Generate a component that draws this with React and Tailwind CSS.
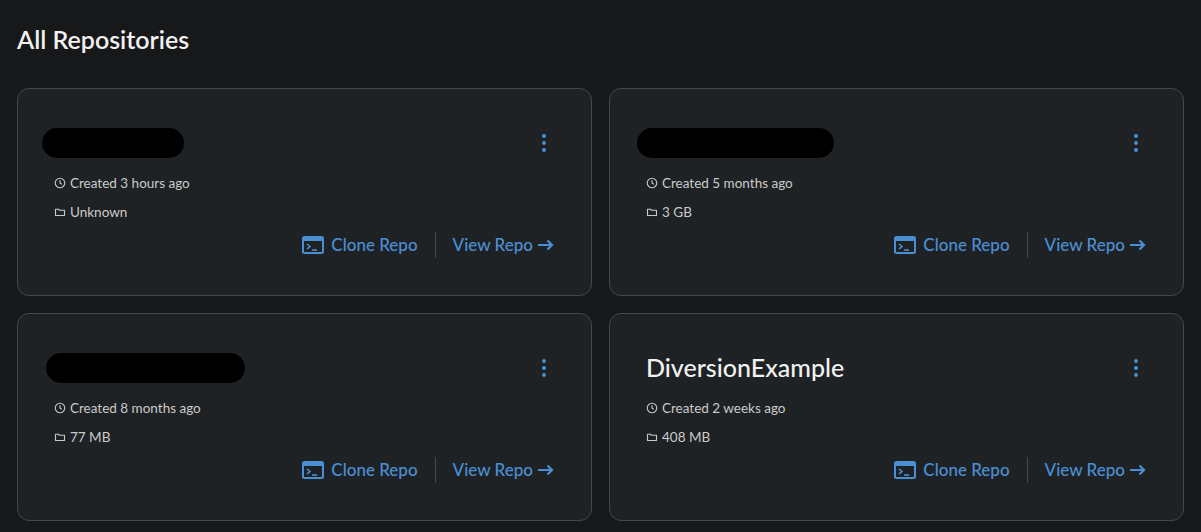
import React from "react";

const Clock = () => (
  <svg width="12" height="12" viewBox="0 0 24 24" fill="none" stroke="currentColor" strokeWidth="2.2" strokeLinecap="round"><circle cx="12" cy="12" r="9.5"/><path d="M12 7v5l3 2"/></svg>
);
const Folder = () => (
  <svg width="12" height="12" viewBox="0 0 24 24" fill="none" stroke="currentColor" strokeWidth="2.2" strokeLinejoin="round"><path d="M3 6.5h6l2 2h10V19H3z"/></svg>
);
const Term = () => (
  <svg width="22" height="20" viewBox="0 0 22 20"><rect x="1" y="2" width="20" height="16" rx="1.5" fill="none" stroke="#4a8fd4" strokeWidth="2"/><rect x="1" y="2" width="20" height="4" fill="#4a8fd4"/><path d="M5 9l3 2.5L5 14" fill="none" stroke="#4a8fd4" strokeWidth="1.6"/><path d="M10 15h5" stroke="#4a8fd4" strokeWidth="1.6"/></svg>
);
const Arrow = () => (
  <svg width="16" height="12" viewBox="0 0 16 12" fill="none" stroke="#4a8fd4" strokeWidth="2.2"><path d="M0 6h14M9.5 1.5L14 6l-4.5 4.5"/></svg>
);

function Card({ name, redact, created, size }) {
  return (
    <div className="h-[208px] rounded-xl border border-[#45484b] bg-[#1f2224] pl-[36px] pr-[37px] pt-[38px]">
      <div className="flex h-[32px] items-center justify-between">
        {name ? (
          <div className="text-[25px] font-medium text-[#f1f1f1]">{name}</div>
        ) : (
          <div className="h-[30px] rounded-full bg-black" style={{ width: redact.w, marginLeft: redact.ml }} />
        )}
        <div className="mr-[8px] flex flex-col gap-[3px]">
          {[0, 1, 2].map((i) => <span key={i} className="h-[4px] w-[4px] rounded-full bg-[#4a8fd4]" />)}
        </div>
      </div>
      <div className="mt-[14px] flex items-center gap-[4px] text-[13.5px] text-[#c9cacb]"><Clock />{created}</div>
      <div className="mt-[9px] flex items-center gap-[4px] text-[13.5px] text-[#c9cacb]"><Folder />{size}</div>
      <div className="mt-[10px] flex items-center justify-end text-[17px] font-medium text-[#4a8fd4]">
        <div className="flex items-center gap-[7px]"><Term />Clone Repo</div>
        <div className="mx-[17px] h-[26px] w-px bg-[#45484b]" />
        <div className="flex items-center gap-[5px]">View Repo <Arrow /></div>
      </div>
    </div>
  );
}

export default function App() {
  return (
    <div className="h-[532px] w-[1201px] bg-[#171819] px-[17px] pt-[21px]" style={{ fontFamily: "Lato, 'Noto Sans', sans-serif" }}>
      <h1 className="mb-[29px] text-[25px] font-semibold text-[#f1f1f1]">All Repositories</h1>
      <div className="grid grid-cols-2 gap-x-[17px] gap-y-[17px]">
        <Card redact={{ w: 142, ml: -12 }} created="Created 3 hours ago" size="Unknown" />
        <Card redact={{ w: 197, ml: -9 }} created="Created 5 months ago" size="3 GB" />
        <Card redact={{ w: 199, ml: -8 }} created="Created 8 months ago" size="77 MB" />
        <Card name="DiversionExample" created="Created 2 weeks ago" size="408 MB" />
      </div>
    </div>
  );
}
